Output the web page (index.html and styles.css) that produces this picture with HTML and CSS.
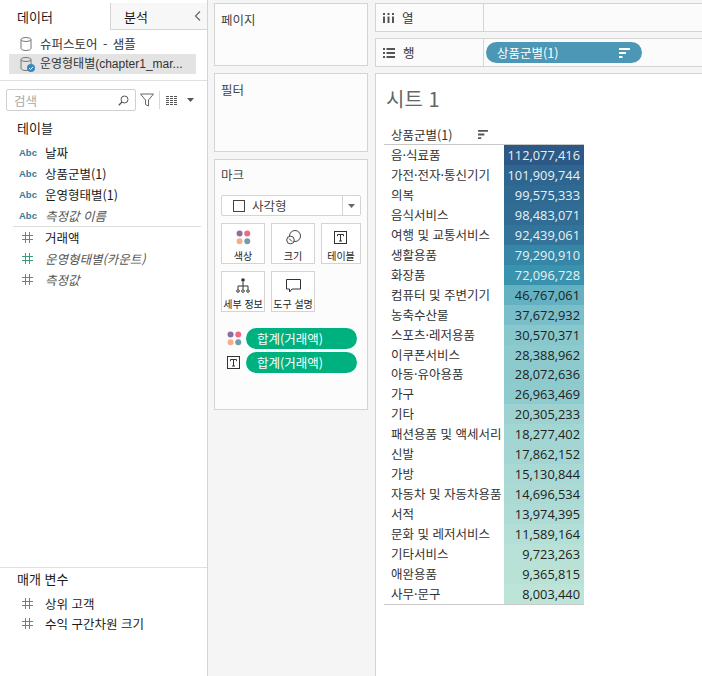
FILE: index.html
```html
<!DOCTYPE html>
<html lang="ko">
<head>
<meta charset="utf-8">
<title>시트 1</title>
<link rel="stylesheet" href="styles.css">
</head>
<body>
<svg width="0" height="0" class="defs">
  <defs>
    <symbol id="dots" viewBox="0 0 16 16"><circle cx="3.8" cy="3.8" r="3.2" fill="#8a6f9c"/><circle cx="12" cy="3.8" r="3.2" fill="#ee6b80"/><circle cx="3.8" cy="12" r="3.2" fill="#f2b088"/><circle cx="12" cy="12" r="3.2" fill="#6f9ea8"/></symbol>
    <symbol id="tbox" viewBox="0 0 14 14"><rect x=".5" y=".5" width="12" height="12" fill="none" stroke="#333"/><path d="M3.5 3.5h6v1.6M6.5 3.5v6.5M5 10h3M3.5 3.5v1.6" fill="none" stroke="#333"/></symbol>
    <symbol id="sort" viewBox="0 0 11 10"><path d="M0 0h11v2H0zM0 4h7v2H0zM0 8h3.500v2H0z"/></symbol>
    <symbol id="hash" viewBox="0 0 11 11"><path d="M3.500 0v11M7.500 0v11M0 3.500h11M0 7.500h11" fill="none" stroke="#3f9b78" stroke-width="1"/></symbol>
  </defs>
</svg>
<div class="app">
  <aside class="sidebar">
    <div class="tabs">
      <div class="tab tab-on">데이터</div>
      <div class="tab tab-off"><span>분석</span><svg width="7" height="10" viewBox="0 0 7 10"><path d="M6 .5 1.500 5 6 9.500" fill="none" stroke="#666" stroke-width="1.200"/></svg></div>
    </div>
    <div class="sources">
      <div class="source source-plain"><svg class="db" width="12" height="14" viewBox="0 0 12 14"><ellipse cx="6" cy="2.500" rx="5" ry="2" fill="none" stroke="#777"/><path d="M1 2.500v9c0 1 2 2 5 2s5-1 5-2v-9" fill="none" stroke="#777"/></svg><span>슈퍼스토어 - 샘플</span></div>
      <div class="source source-on"><span class="dbwrap"><svg class="db" width="12" height="14" viewBox="0 0 12 14"><ellipse cx="6" cy="2.500" rx="5" ry="2" fill="none" stroke="#777"/><path d="M1 2.500v9c0 1 2 2 5 2s5-1 5-2v-9" fill="none" stroke="#777"/></svg><svg class="check" width="8" height="8" viewBox="0 0 8 8"><circle cx="4" cy="4" r="4" fill="#3b88b8"/><path d="M2 4l1.500 1.500L6 2.800" fill="none" stroke="#fff"/></svg></span><span class="ellip">운영형태별(chapter1_mar...</span></div>
    </div>
    <div class="searchbar">
      <div class="search"><span>검색</span><svg width="11" height="11" viewBox="0 0 11 11"><circle cx="6.500" cy="4.500" r="3.500" fill="none" stroke="#555"/><path d="M4 7 .8 10.200" stroke="#555" stroke-width="1.300"/></svg></div>
      <svg class="funnel" width="14" height="14" viewBox="0 0 14 14"><path d="M.5 1h13L8.500 7v6l-3-1.500V7z" fill="none" stroke="#666"/></svg>
      <span class="vsep"></span>
      <svg class="gridic" width="12" height="9" viewBox="0 0 12 9"><path d="M0 .5h12M0 2.500h12M0 4.500h12M0 6.500h12M0 8.500h12" stroke="#555" stroke-dasharray="3 1"/></svg>
      <svg class="caret" width="7" height="4" viewBox="0 0 7 4"><path d="M0 0h7L3.500 4z" fill="#555"/></svg>
    </div>
    <h3 class="group">테이블</h3>
    <ul class="fields">
      <li><b class="abc">Abc</b>날짜</li>
      <li><b class="abc">Abc</b>상품군별(1)</li>
      <li><b class="abc">Abc</b>운영형태별(1)</li>
      <li class="calc"><b class="abc">Abc</b>측정값 이름</li>
    </ul>
    <div class="fields-sep"></div>
    <ul class="fields">
      <li><svg class="hash"><use href="#hash"/></svg>거래액</li>
      <li class="calc"><svg class="hash"><use href="#hash"/></svg>운영형태별(카운트)</li>
      <li class="calc"><svg class="hash"><use href="#hash"/></svg>측정값</li>
    </ul>
    <div class="params">
      <h3 class="group">매개 변수</h3>
      <ul class="fields">
        <li><svg class="hash"><use href="#hash"/></svg>상위 고객</li>
        <li><svg class="hash"><use href="#hash"/></svg>수익 구간차원 크기</li>
      </ul>
    </div>
  </aside>

  <section class="cards">
    <div class="card card-page">페이지</div>
    <div class="card card-filter">필터</div>
    <div class="card card-marks">
      <div class="marks-title">마크</div>
      <div class="marktype"><svg width="12" height="12" viewBox="0 0 12 12"><rect x=".5" y=".5" width="11" height="11" fill="none" stroke="#444"/></svg><span class="mt-label">사각형</span><span class="mt-drop"><svg width="7" height="4" viewBox="0 0 7 4"><path d="M0 0h7L3.500 4z" fill="#666"/></svg></span></div>
      <div class="markbtns">
        <div class="markbtn"><svg class="mi" width="15" height="15"><use href="#dots"/></svg>색상</div>
        <div class="markbtn"><svg class="mi" width="15" height="15" viewBox="0 0 15 15"><circle cx="9" cy="6" r="5.500" fill="none" stroke="#444"/><circle cx="4.500" cy="10" r="3.800" fill="#fff" stroke="#444"/><path d="M3 8.500l3 3" stroke="#444"/></svg>크기</div>
        <div class="markbtn"><svg class="mi" width="14" height="14"><use href="#tbox"/></svg>테이블</div>
        <div class="markbtn"><svg class="mi" width="14" height="15" viewBox="0 0 14 15"><circle cx="7" cy="2" r="1.800" fill="#333"/><path d="M7 4v4M2 11V8h10v3M7 8v3" fill="none" stroke="#333"/><circle cx="2" cy="13" r="1.300" fill="none" stroke="#333"/><circle cx="7" cy="13" r="1.300" fill="none" stroke="#333"/><circle cx="12" cy="13" r="1.300" fill="none" stroke="#333"/></svg>세부 정보</div>
        <div class="markbtn"><svg class="mi" width="15" height="14" viewBox="0 0 15 14"><path d="M.5.500h14v9.500H6L3.500 13v-3h-3z" fill="none" stroke="#333"/></svg>도구 설명</div>
      </div>
      <div class="markpill"><svg width="15" height="15"><use href="#dots"/></svg><span class="pill-green">합계(거래액)</span></div>
      <div class="markpill"><svg width="14" height="14"><use href="#tbox"/></svg><span class="pill-green">합계(거래액)</span></div>
    </div>
  </section>

  <main class="view">
    <div class="shelf">
      <div class="shelf-label"><svg width="11" height="10" viewBox="0 0 11 10"><path d="M1 0v2M5.500 0v2M10 0v2M1 3.500V10M5.500 3.500V10M10 3.500V10" stroke="#555" stroke-width="2"/></svg>열</div>
    </div>
    <div class="shelf">
      <div class="shelf-label"><svg width="12" height="10" viewBox="0 0 12 10"><path d="M0 1h2M3.500 1H12M0 5h2M3.500 5H12M0 9h2M3.500 9H12" stroke="#555" stroke-width="2"/></svg>행</div>
      <div class="shelf-body"><span class="pill-blue">상품군별(1)<svg width="11" height="10"><use href="#sort" fill="#fff"/></svg></span></div>
    </div>
    <div class="sheet">
      <h1 class="sheet-title">시트 1</h1>
      <div class="crosstab">
        <div class="ct-head"><span>상품군별(1)</span><svg width="10" height="9"><use href="#sort" fill="#555"/></svg></div>
        <div class="ct-row"><span class="ct-name">음·식료품</span><span class="ct-val ct-light" style="background:#2c5985">112,077,416</span></div>
        <div class="ct-row"><span class="ct-name">가전·전자·통신기기</span><span class="ct-val ct-light" style="background:#2e6690">101,909,744</span></div>
        <div class="ct-row"><span class="ct-name">의복</span><span class="ct-val ct-light" style="background:#2f6a93">99,575,333</span></div>
        <div class="ct-row"><span class="ct-name">음식서비스</span><span class="ct-val ct-light" style="background:#306c94">98,483,071</span></div>
        <div class="ct-row"><span class="ct-name">여행 및 교통서비스</span><span class="ct-val ct-light" style="background:#32749a">92,439,061</span></div>
        <div class="ct-row"><span class="ct-name">생활용품</span><span class="ct-val ct-light" style="background:#3586a7">79,290,910</span></div>
        <div class="ct-row"><span class="ct-name">화장품</span><span class="ct-val ct-light" style="background:#3993af">72,096,728</span></div>
        <div class="ct-row"><span class="ct-name">컴퓨터 및 주변기기</span><span class="ct-val" style="background:#64b1c1">46,767,061</span></div>
        <div class="ct-row"><span class="ct-name">농축수산물</span><span class="ct-val" style="background:#79bec8">37,672,932</span></div>
        <div class="ct-row"><span class="ct-name">스포츠·레저용품</span><span class="ct-val" style="background:#88c7cc">30,570,371</span></div>
        <div class="ct-row"><span class="ct-name">이쿠폰서비스</span><span class="ct-val" style="background:#8ccacd">28,388,962</span></div>
        <div class="ct-row"><span class="ct-name">아동·유아용품</span><span class="ct-val" style="background:#8dcacd">28,072,636</span></div>
        <div class="ct-row"><span class="ct-name">가구</span><span class="ct-val" style="background:#8ecbce">26,963,469</span></div>
        <div class="ct-row"><span class="ct-name">기타</span><span class="ct-val" style="background:#9ed2d1">20,305,233</span></div>
        <div class="ct-row"><span class="ct-name">패션용품 및 액세서리</span><span class="ct-val" style="background:#a2d6d3">18,277,402</span></div>
        <div class="ct-row"><span class="ct-name">신발</span><span class="ct-val" style="background:#a3d6d3">17,862,152</span></div>
        <div class="ct-row"><span class="ct-name">가방</span><span class="ct-val" style="background:#a9d9d4">15,130,844</span></div>
        <div class="ct-row"><span class="ct-name">자동차 및 자동차용품</span><span class="ct-val" style="background:#abdad5">14,696,534</span></div>
        <div class="ct-row"><span class="ct-name">서적</span><span class="ct-val" style="background:#addbd5">13,974,395</span></div>
        <div class="ct-row"><span class="ct-name">문화 및 레저서비스</span><span class="ct-val" style="background:#b3dfd6">11,589,164</span></div>
        <div class="ct-row"><span class="ct-name">기타서비스</span><span class="ct-val" style="background:#b8e2d7">9,723,263</span></div>
        <div class="ct-row"><span class="ct-name">애완용품</span><span class="ct-val" style="background:#b9e2d7">9,365,815</span></div>
        <div class="ct-row"><span class="ct-name">사무·문구</span><span class="ct-val" style="background:#bce4d8">8,003,440</span></div>
      </div>
    </div>
  </main>
</div>
</body>
</html>
```

FILE: styles.css
```css
* { box-sizing: border-box; }
html, body { margin: 0; height: 100%; }
body {
  background: #f5f5f5;
  color: #1a1a1a;
  font-family: "Noto Sans CJK KR", "Noto Sans", sans-serif;
  font-size: 12.500px;
  overflow: hidden;
}
.defs { position: absolute; }
.app {
  display: grid;
  grid-template-columns: 208px 166px 1fr;
  height: 676px;
}

/* sidebar */
.sidebar {
  display: flex;
  flex-direction: column;
  background: #fff;
  border-right: 1px solid #d4d4d4;
  padding-top: 3px;
}
.tabs { display: flex; height: 27px; }
.tab { display: flex; align-items: center; font-size: 13px; }
.tab-on { width: 110px; padding-left: 17px; }
.tab-off {
  flex: 1;
  justify-content: space-between;
  padding: 0 6px 0 13px;
  background: #f7f7f7;
  border-left: 1px solid #d4d4d4;
  border-bottom: 1px solid #d4d4d4;
}
.sources {
  padding: 4px 11px 6px 9px;
  border-bottom: 1px solid #e0e0e0;
}
.source {
  display: flex;
  align-items: center;
  gap: 8px;
  height: 20px;
  padding-left: 11px;
  line-height: 20px;
  color: #333;
}
.source-plain { word-spacing: 2px; }
.source-on { background: #e3e3e3; }
.dbwrap { position: relative; display: flex; }
.check { position: absolute; right: -3px; bottom: -1px; }
.ellip { font-family: "Liberation Sans", "Noto Sans CJK KR", sans-serif; font-size: 12px; white-space: nowrap; }
.searchbar {
  display: flex;
  align-items: center;
  height: 22px;
  margin: 8px 0 0 6px;
}
.search {
  display: flex;
  align-items: center;
  justify-content: space-between;
  width: 130px;
  height: 22px;
  padding: 0 6px 0 7px;
  border: 1px solid #d0d0d0;
  border-radius: 2px;
  color: #a8a8a8;
}
.funnel { margin-left: 4px; }
.vsep { width: 1px; height: 18px; margin-left: 5px; background: #d8d8d8; }
.gridic { margin-left: 6px; }
.caret { margin-left: 9px; }
.group {
  margin: 7px 0 0 17px;
  height: 20px;
  font-size: 13px;
  font-weight: 400;
  line-height: 20px;
}
.fields { list-style: none; margin: 4px 0 0; padding: 0; }
.fields li {
  display: flex;
  align-items: center;
  height: 21px;
  padding-left: 19px;
  white-space: nowrap;
}
.fields .calc { font-style: italic; color: #555; }
.abc {
  width: 26px;
  font-family: "Liberation Sans", sans-serif;
  font-size: 9.500px;
  font-style: normal;
  font-weight: 700;
  color: #3b7a98;
}
.hash { width: 11px; height: 11px; margin: 0 12px 0 3px; flex: none; }
.fields-sep { height: 1px; margin: 0 6px 0 13px; background: #ddd; }
.fields-sep + .fields { margin-top: 0; }
.params {
  margin-top: auto;
  height: 109px;
  border-top: 1px solid #e0e0e0;
}
.params .group { margin-top: 1px; }
.params .fields { margin-top: 4px; }
.params .fields li { height: 20px; }

/* middle cards */
.cards {
  display: flex;
  flex-direction: column;
  gap: 7px;
  padding: 3px 6px 0;
}
.card {
  background: #fcfcfc;
  border: 1px solid #d4d4d4;
  padding: 6px;
  color: #444;
}
.card-page { height: 63px; }
.card-filter { height: 79px; }
.card-marks { height: 251px; }
.marks-title { line-height: 18px; height: 18px; }
.marktype {
  display: flex;
  align-items: center;
  height: 21px;
  margin-top: 11px;
  padding-left: 11px;
  background: #fff;
  border: 1px solid #d4d4d4;
  border-radius: 2px;
}
.mt-label { margin-left: 7px; flex: 1; }
.mt-drop {
  display: flex;
  align-items: center;
  justify-content: center;
  width: 18px;
  height: 100%;
  border-left: 1px solid #d4d4d4;
}
.markbtns {
  display: grid;
  grid-template-columns: 44px 44px 40px;
  column-gap: 6px;
  row-gap: 7px;
  margin-top: 7px;
  margin-bottom: 16px;
}
.markbtn {
  display: flex;
  flex-direction: column;
  align-items: center;
  justify-content: flex-end;
  gap: 4px;
  height: 41px;
  padding-bottom: 1px;
  font-size: 10px;
  line-height: 13px;
  white-space: nowrap;
  color: #222;
  background: #fff;
  border: 1px solid #d4d4d4;
}
.markpill {
  display: flex;
  align-items: center;
  justify-content: space-between;
  height: 21px;
  margin: 0 4px 3px 6px;
}
.pill-green {
  display: flex;
  align-items: center;
  width: 111px;
  height: 21px;
  padding-left: 11px;
  border-radius: 11px;
  background: #00b180;
  color: #fff;
}

/* view */
.view {
  display: flex;
  flex-direction: column;
  gap: 6px;
  padding: 3px 0 0 1px;
  min-width: 0;
}
.shelf {
  display: flex;
  flex: none;
  height: 29px;
  background: #fbfbfb;
  border: 1px solid #d4d4d4;
  border-right: 0;
}
.shelf-label {
  display: flex;
  align-items: center;
  gap: 8px;
  width: 108px;
  padding-left: 7px;
  border-right: 1px solid #d4d4d4;
  color: #333;
}
.shelf-body { display: flex; align-items: center; padding-left: 2px; }
.pill-blue {
  display: flex;
  align-items: center;
  justify-content: space-between;
  width: 156px;
  height: 21px;
  padding: 0 12px 0 11px;
  border-radius: 11px;
  background: #4b97b5;
  color: #fff;
}
.sheet {
  flex: 1;
  padding: 0 0 0 8px;
  background: #fff;
  border: 1px solid #d4d4d4;
  border-width: 1px 0 0 1px;
}
.sheet-title {
  margin: 12px 0 0 2px;
  height: 25px;
  font-size: 20px;
  font-weight: 400;
  line-height: 25px;
  color: #666;
}
.crosstab { width: 200px; margin-top: 14px; border-bottom: 1px solid #c8c8c8; }
.ct-head {
  display: flex;
  align-items: center;
  justify-content: space-between;
  height: 20px;
  padding: 0 96px 0 7px;
  color: #333;
  border-bottom: 1px solid #c8c8c8;
}
.ct-row { display: flex; height: 19.960px; }
.ct-name {
  width: 120px;
  padding-left: 7px;
  line-height: 20px;
  white-space: nowrap;
  overflow: hidden;
  color: #333;
}
.ct-val {
  width: 80px;
  padding-right: 4px;
  font-family: "Open Sans", sans-serif;
  font-size: 12.800px;
  line-height: 20px;
  text-align: right;
  color: #222;
}
.ct-light { color: #eaf1f4; }
```
